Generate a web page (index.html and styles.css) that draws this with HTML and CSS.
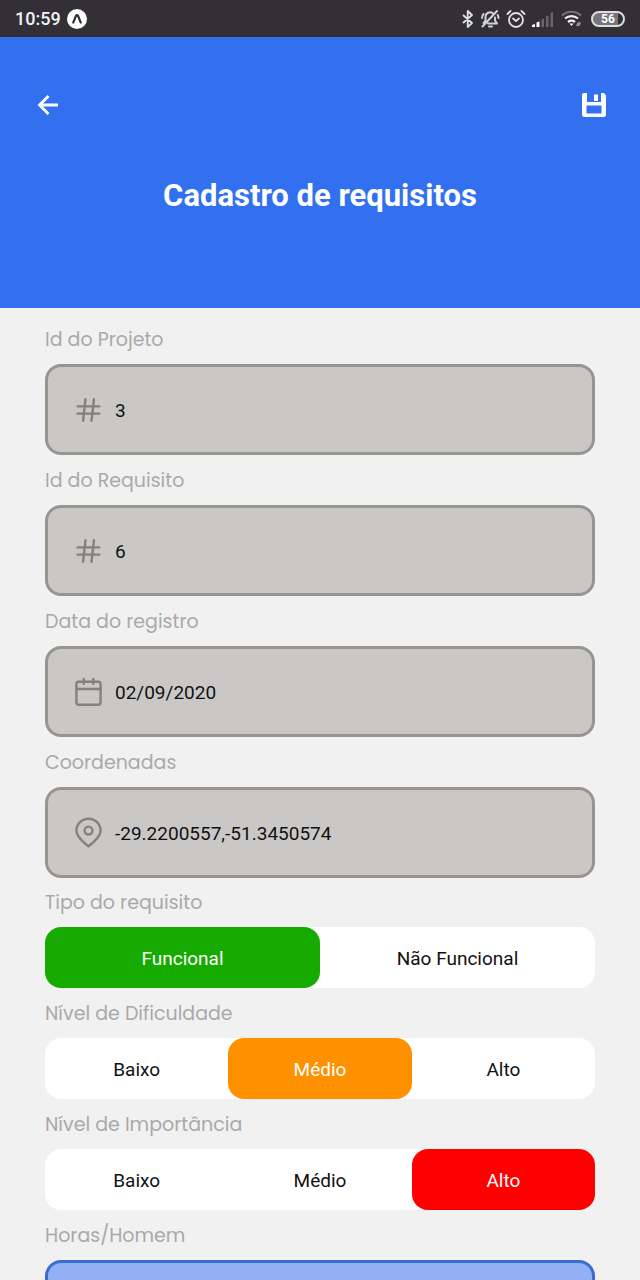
FILE: index.html
```html
<!DOCTYPE html>
<html lang="pt-BR">
<head>
<meta charset="utf-8">
<meta name="viewport" content="width=device-width, initial-scale=1">
<title>Cadastro de requisitos</title>
<link rel="stylesheet" href="styles.css">
</head>
<body>
<div class="app">
  <div class="status">
    <div class="status-side">
      <span class="clock">10:59</span>
      <svg width="20" height="20" viewBox="0 0 20 20"><circle cx="10" cy="10" r="10" fill="#fff"/><path d="M6.200 13.600 L9 6.800 Q10 5.200 11 6.800 L13.800 13.600" fill="none" stroke="#322f37" stroke-width="2.200" stroke-linecap="round"/></svg>
    </div>
    <div class="status-side">
      <svg width="12" height="18" viewBox="0 0 12 18" fill="none" stroke="#e0dfe2" stroke-width="1.800" stroke-linejoin="round"><path d="M1 5l9 8-4.300 4V1L10 5 1 13"/></svg>
      <svg width="20" height="20" viewBox="0 0 20 20" fill="none" stroke="#d2d1d4" stroke-width="2" stroke-linecap="round" stroke-linejoin="round"><path d="M8 14.500h9l-2-3V8.500M13 4.500a4.500 4.500 0 0 0-7.500 3.500v3.500L3.500 14M9 17.500h3M2.500 17.500 17 2M2 9c0-2 .5-3 1.500-4M18.500 9c0-1.200-.3-2.200-.8-3"/></svg>
      <svg width="20" height="20" viewBox="0 0 20 20" fill="none" stroke="#e0dfe2" stroke-width="1.800" stroke-linecap="round"><circle cx="10" cy="11" r="7"/><path d="M7 9.500l3 2.500 3-2.500M1.500 5l3-3M18.500 5l-3-3"/></svg>
      <svg width="21" height="16" viewBox="0 0 21 16"><path d="M0 14l3-1v3H0zM4.500 11.500l3-1V16h-3z" fill="#fff"/><path d="M9.500 8.500l2.500-1V16H9.500zM14 5.500l2.500-1V16H14zM18.500 2l2.500-1v15h-2.500z" fill="#68656d"/></svg>
      <svg class="wifi" width="22" height="17" viewBox="0 0 22 17" fill="none"><path d="M1 5.500a14 14 0 0 1 19 0" stroke="#77747b" stroke-width="2"/><path d="M4 8.500a10 10 0 0 1 13 0M7 12a6 6 0 0 1 7 0" stroke="#f2f1f3" stroke-width="2.200"/><path d="M8.500 13.500h4l-2 2.500z" fill="#fff"/><path d="M15 16l1-3 2-1 2 .5-1 3-2 .8z" fill="#918e95"/></svg>
      <span class="battery">56</span>
    </div>
  </div>

  <header class="header">
    <nav class="toolbar">
      <button class="icon-button" type="button" aria-label="Voltar">
        <svg width="24" height="24" viewBox="0 0 24 24" fill="none" stroke="#fff" stroke-width="2.800"><path d="M22 12H4M12.500 3 3.500 12l9 9"/></svg>
      </button>
      <button class="icon-button" type="submit" form="requisito" aria-label="Salvar">
        <svg width="24" height="24" viewBox="0 0 24 24"><path fill="#fff" fill-rule="evenodd" d="M2 0h3v9h14V0h3l2 2.500V21.500a2.500 2.500 0 0 1-2.500 2.500h-19A2.500 2.500 0 0 1 0 21.500V2A2 2 0 0 1 2 0zM4.500 12.500v8h15v-8z"/><path fill="#fff" d="M12 1.500h4V8h-4z"/></svg>
      </button>
    </nav>
    <h1 class="title">Cadastro de requisitos</h1>
  </header>

  <form class="form" id="requisito">
    <div class="section">
      <div class="field">
        <label class="caption" for="projeto">Id do Projeto</label>
        <div class="box">
          <svg class="icon" viewBox="0 0 24 24"><path d="M3 9h18M3 15h18M9.500 3 7.500 21M16.500 3l-2 18"/></svg>
          <input class="value" id="projeto" type="text" value="3" readonly>
        </div>
      </div>
      <div class="field">
        <label class="caption" for="idreq">Id do Requisito</label>
        <div class="box">
          <svg class="icon" viewBox="0 0 24 24"><path d="M3 9h18M3 15h18M9.500 3 7.500 21M16.500 3l-2 18"/></svg>
          <input class="value" id="idreq" type="text" value="6" readonly>
        </div>
      </div>
      <div class="field">
        <label class="caption" for="data">Data do registro</label>
        <div class="box">
          <svg class="icon" viewBox="0 0 24 24"><rect x="2" y="3.500" width="20" height="19" rx="2"/><path d="M8 1.200v4M16 1.200v4M2 9.500h20"/></svg>
          <input class="value" id="data" type="text" value="02/09/2020" readonly>
        </div>
      </div>
      <div class="field">
        <label class="caption" for="coord">Coordenadas</label>
        <div class="box">
          <svg class="icon" viewBox="0 0 24 24"><path d="M22 10c0 6-10 13-10 13S2 16 2 10a10 9.800 0 0 1 20 0z"/><circle cx="12" cy="10" r="3.300"/></svg>
          <input class="value" id="coord" type="text" value="-29.2200557,-51.3450574" readonly>
        </div>
      </div>
    </div>

    <div class="section">
      <div class="field" role="radiogroup" aria-labelledby="tipo">
        <span class="caption" id="tipo">Tipo do requisito</span>
        <div class="segments">
          <label class="segment green"><input type="radio" name="tipo" checked>Funcional</label>
          <label class="segment green"><input type="radio" name="tipo">Não Funcional</label>
        </div>
      </div>
      <div class="field" role="radiogroup" aria-labelledby="dificuldade">
        <span class="caption" id="dificuldade">Nível de Dificuldade</span>
        <div class="segments">
          <label class="segment green"><input type="radio" name="dificuldade">Baixo</label>
          <label class="segment orange"><input type="radio" name="dificuldade" checked>Médio</label>
          <label class="segment red"><input type="radio" name="dificuldade">Alto</label>
        </div>
      </div>
      <div class="field" role="radiogroup" aria-labelledby="importancia">
        <span class="caption" id="importancia">Nível de Importância</span>
        <div class="segments">
          <label class="segment green"><input type="radio" name="importancia">Baixo</label>
          <label class="segment orange"><input type="radio" name="importancia">Médio</label>
          <label class="segment red"><input type="radio" name="importancia" checked>Alto</label>
        </div>
      </div>
      <div class="field">
        <label class="caption" for="horas">Horas/Homem</label>
        <div class="box editable">
          <input class="value" id="horas" type="text">
        </div>
      </div>
    </div>
  </form>
</div>
</body>
</html>
```
FILE: styles.css
```css
* {
  box-sizing: border-box;
}

body {
  margin: 0;
  background: #f1f1f1;
  color: #111;
  font-family: Roboto, "Liberation Sans", sans-serif;
  font-size: 19px;
}

.app {
  display: flex;
  flex-direction: column;
  height: 100vh;
}

.status {
  display: flex;
  flex: none;
  align-items: center;
  justify-content: space-between;
  height: 37px;
  padding: 0 15px;
  background: #322f37;
}

.status-side {
  display: flex;
  align-items: center;
  gap: 6px;
}

.clock {
  color: #f2f1f3;
  font-size: 18px;
  font-weight: 500;
}

.wifi {
  margin: 0 2px;
}

.battery {
  width: 34px;
  border: 2px solid #dddcdf;
  border-radius: 8px;
  background: linear-gradient(90deg, #77747b 85%, #322f37 85%);
  color: #fff;
  font-size: 12px;
  font-weight: 700;
  line-height: 12px;
  text-align: center;
}

.header {
  flex: none;
  padding: 48px 32px 91px;
  background: #3370f0;
}

.toolbar {
  display: flex;
  justify-content: space-between;
  padding-left: 2px;
}

.icon-button {
  display: flex;
  padding: 8px 2px;
  border: 0;
  background: none;
  cursor: pointer;
}

.title {
  margin: 50px 0 0;
  color: #fff;
  font-size: 31px;
  font-weight: 700;
  line-height: 42px;
  text-align: center;
}

.form {
  display: flex;
  flex: 1;
  flex-direction: column;
  gap: 9px;
  min-height: 0;
  padding: 16px 45px;
  overflow-y: auto;
  scrollbar-width: none;
}

.section {
  display: flex;
  flex: none;
  flex-direction: column;
  gap: 10px;
}

.caption {
  display: block;
  margin-bottom: 8px;
  color: #a9a9a9;
  font-family: Poppins, Inter, sans-serif;
  font-size: 19px;
  line-height: 32px;
}

.box {
  display: flex;
  align-items: center;
  gap: 12px;
  height: 91px;
  padding: 0 26px;
  border: 3px solid #989590;
  border-radius: 16px;
  background: #cac8c6;
}

.editable {
  border-color: #3a6cd4;
  background: #94b0f5;
}

.icon {
  flex: none;
  width: 29px;
  height: 32px;
  fill: none;
  stroke: #85807e;
  stroke-width: 2;
  stroke-linecap: round;
  stroke-linejoin: round;
}

.value {
  flex: 1;
  min-width: 0;
  padding: 2px 0 0;
  border: 0;
  outline: 0;
  background: none;
  color: inherit;
  font: inherit;
}

.segments {
  display: flex;
  border-radius: 16px;
  background: #fff;
}

.segment {
  display: flex;
  flex: 1;
  align-items: center;
  justify-content: center;
  height: 61px;
  padding-top: 2px;
  border-radius: 16px;
  cursor: pointer;
}

.segment input {
  width: 0;
  height: 0;
  margin: 0;
  appearance: none;
}

.segment:has(:checked) {
  color: #fff;
}

.green:has(:checked) {
  background: #17ab02;
}

.orange:has(:checked) {
  background: #ff9100;
}

.red:has(:checked) {
  background: #f00;
}
```
